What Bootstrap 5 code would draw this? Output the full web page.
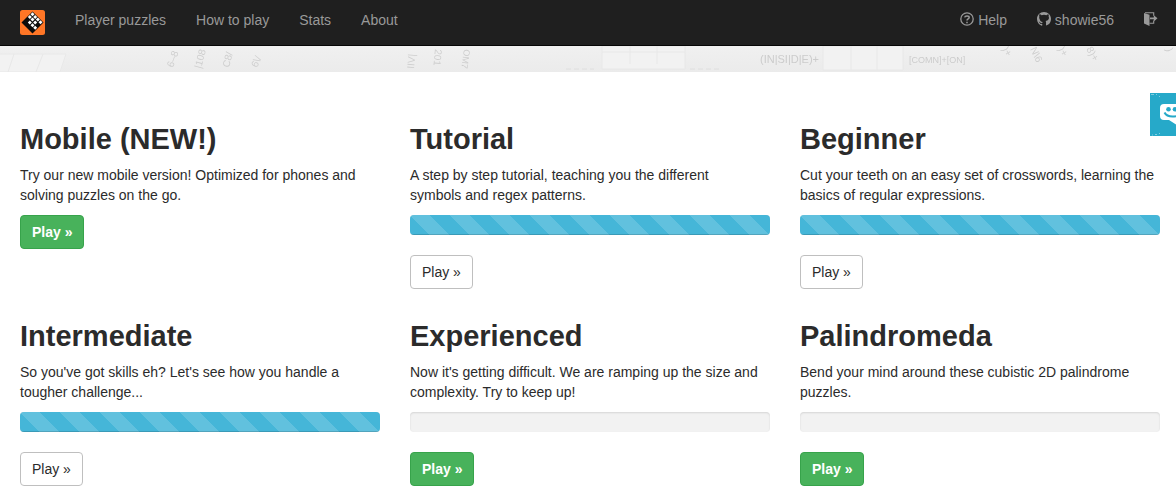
<!DOCTYPE html>
<html lang="en">
<head>
<meta charset="utf-8">
<meta name="viewport" content="width=device-width, initial-scale=1">
<title>Regex Crossword</title>
<link rel="stylesheet" href="https://cdn.jsdelivr.net/npm/bootstrap@5.3.0/dist/css/bootstrap.min.css">
<style>
  body { font-family: "Liberation Sans", Arial, sans-serif; font-size: 14px; line-height: 20px; color: #2b2b2b; background: #fff; }
  .site-bar { background: #1f1f1f; border-bottom: 1px solid #060606; min-height: 46px; padding: 0 10px; }
  .site-bar .navbar-brand { padding: 10px 10px 0; margin: 0 5px 0 0; line-height: 0; }
  .site-bar .navbar-nav .nav-link { color: #999; padding: 10px 15px 15px; line-height: 20px; }
  .site-bar .navbar-nav .nav-link:hover { color: #fff; }
  .site-bar .nav-link svg { vertical-align: -1px; }
  .banner { height: 26px; background: #eee; }
  .banner svg { display: block; width: 100%; height: 26px; }
  .levels { padding: 49px 16px 0 20px; }
  .levels .row { --bs-gutter-x: 30px; --bs-gutter-y: 29px; }
  .levels h2 { font-size: 29px; line-height: 36px; font-weight: 700; margin: 0 0 8px; }
  .levels p { margin: 0 0 10px; }
  .progress { height: 20px; background: #f2f2f2; border-radius: 4px; margin-bottom: 20px; box-shadow: inset 0 1px 2px rgba(0,0,0,.12); }
  .progress .progress-bar { background-color: #45b6d8; background-size: 40px 40px; box-shadow: inset 0 -1px 0 rgba(0,0,0,.15); }
  .btn { --bs-btn-padding-x: 11px; --bs-btn-padding-y: 6px; --bs-btn-font-size: 14px; --bs-btn-line-height: 20px; --bs-btn-border-radius: 4px; }
  .btn-done { --bs-btn-color: #2b2b2b; --bs-btn-bg: #fff; --bs-btn-border-color: #bfbfbf; --bs-btn-hover-bg: #eee; --bs-btn-hover-border-color: #aaa; }
  .btn-play { --bs-btn-color: #fff; --bs-btn-bg: #48b25b; --bs-btn-border-color: #37a34b; --bs-btn-hover-color: #fff; --bs-btn-hover-bg: #3a974b; font-weight: 700; }
  .feedback { position: fixed; top: 93px; right: 0; width: 26px; height: 43px; padding: 0; border: 0; background: #26a9c9; overflow: hidden; }
  .feedback svg { display: block; }
</style>
</head>
<body>
<nav class="navbar navbar-expand site-bar align-items-start" aria-label="Main">
  <a class="navbar-brand" href="#" aria-label="Home">
    <svg width="25" height="25" viewBox="0 0 25 25" aria-hidden="true">
      <rect width="25" height="25" rx="2.5" fill="#ff7626"/>
      <path d="M12.500 1.500 23.500 12.500 12.500 23.500 1.500 12.500Z" fill="#0b0b0b"/>
      <g fill="#fff">
        <path id="c" d="M12.500 2.200l2 2-2 2-2-2z"/>
        <use href="#c" x="-2.700" y="2.700"/><use href="#c" x="2.700" y="2.700"/>
        <use href="#c" y="5.400"/><use href="#c" x="5.400" y="5.400"/>
        <use href="#c" x="-2.700" y="8.400"/><use href="#c" x="2.700" y="8.400"/><use href="#c" x="8" y="8.100"/>
        <use href="#c" x="2.700" y="13.500"/><use href="#c" y="11"/>
      </g>
    </svg>
  </a>
  <ul class="navbar-nav">
    <li class="nav-item"><a class="nav-link" href="#">Player puzzles</a></li>
    <li class="nav-item"><a class="nav-link" href="#">How to play</a></li>
    <li class="nav-item"><a class="nav-link" href="#">Stats</a></li>
    <li class="nav-item"><a class="nav-link" href="#">About</a></li>
  </ul>
  <ul class="navbar-nav ms-auto">
    <li class="nav-item"><a class="nav-link" href="#"><svg width="14" height="14" viewBox="0 0 14 14" fill="none" stroke="currentColor" aria-hidden="true"><circle cx="7" cy="7" r="6.200" stroke-width="1.300"/><path d="M4.700 5.300C5 3.700 9.200 3.500 9.200 5.600 9.200 7 7 7 7 8.600M7 9.700v1.500" stroke-width="1.500"/></svg> Help</a></li>
    <li class="nav-item"><a class="nav-link" href="#"><svg width="14" height="14" viewBox="0 0 16 16" fill="currentColor" aria-hidden="true"><path d="M8 0C3.580 0 0 3.580 0 8c0 3.540 2.290 6.530 5.470 7.590.4.070.55-.17.55-.38 0-.19-.01-.82-.01-1.490-2.010.37-2.530-.49-2.690-.94-.09-.23-.48-.94-.82-1.130-.28-.15-.68-.52-.01-.53.63-.01 1.080.58 1.230.82.72 1.210 1.870.87 2.330.66.07-.52.28-.87.51-1.070-.95-.11-1.950-.48-2.640-1.200C2.500 7.500 2.300 6.200 2.700 5.200 2.300 3.500 2.600 2.900 3 2.700 4 2.800 4.700 3.400 5.200 3.700A9 9 0 0 1 10.800 3.700C11.500 3.200 12.200 2.800 13 2.700 13.500 3.300 13.600 4.300 13.300 5.200 14.200 7 13.500 9 11.800 9.700 11.200 10 10.500 10.100 9.800 10.200c.29.25.54.73.54 1.480 0 1.070-.01 2.930-.01 3.200 0 .21.15.71.2.61A8 8 0 0 0 16 8c0-4.420-3.580-8-8-8Z"/></svg> showie56</a></li>
    <li class="nav-item"><a class="nav-link pe-2" href="#" aria-label="Sign out"><svg width="14" height="14" viewBox="0 0 14 14" fill="currentColor" aria-hidden="true"><path d="M0 1 5.500 2.700V14L0 11.500Z"/><path d="M1 .8h8.700v3M5.500 11.200h4.200V8.500" fill="none" stroke="currentColor" stroke-width="1.100"/><path d="M6 5.400h3.800V3.200L13.500 6.300 9.800 9.400V7.200H6Z"/></svg></a></li>
  </ul>
</nav>

<div class="banner" aria-hidden="true">
  <svg viewBox="0 0 1176 26" preserveAspectRatio="xMidYMid slice">
    <defs>
      <linearGradient id="fade" x2="0" y2="1"><stop offset="0" stop-color="#f0f0f0"/><stop offset="1" stop-color="#ebebeb"/></linearGradient>
      <filter id="soft"><feGaussianBlur stdDeviation=".5"/></filter>
    </defs>
    <rect width="1176" height="26" fill="url(#fade)"/>
    <g filter="url(#soft)">
      <g fill="#f2f2f2" stroke="#e8e8e8">
        <path d="M-2 8H66L60 26H-2Z"/><path d="M14 8 8 26M43 8 36 26" />
        <path d="M602 0H685V23H602ZM602 6H685M630 0V18M657 0V18" />
        <path d="M823 0H903V24H823ZM851 0V24M877 0V24"/>
      </g>
      <g fill="#cfcfcf" font-family="Liberation Sans, sans-serif" font-size="10">
        <text transform="translate(173 22) rotate(-70)">6–8</text>
        <text transform="translate(201 23) rotate(-75)">|108</text>
        <text transform="translate(229 22) rotate(-75)">C8/</text>
        <text transform="translate(257 22) rotate(-65)">6\/</text>
        <text transform="translate(414 23) rotate(-85)">IIV|</text>
        <text transform="translate(435 3) rotate(95)">201</text>
        <text transform="translate(464 3) rotate(98)" font-size="9">OM7</text>
        <text transform="translate(1002 3) rotate(60)">)+</text>
        <text transform="translate(1030 3) rotate(65)">N\6</text>
        <text transform="translate(1058 3) rotate(60)">)+</text>
        <text transform="translate(1086 3) rotate(60)">8)+</text>
        <text transform="translate(1166 3) rotate(75)">)</text>
      </g>
      <g fill="#cccccc" font-family="Liberation Sans, sans-serif">
        <text x="760" y="17" font-size="11">(IN|SI|D|E)+</text>
        <text x="909" y="17" font-size="9">[COMN]+[ON]</text>
      </g>
      <path d="M566 23h28M690 23h30" stroke="#dedede" stroke-dasharray="5 3"/>
    </g>
  </svg>
</div>

<main class="container-fluid levels">
  <div class="row row-cols-3">
    <section class="col">
      <h2>Mobile (NEW!)</h2>
      <p>Try our new mobile version! Optimized for phones and solving puzzles on the go.</p>
      <button type="button" class="btn btn-play">Play »</button>
    </section>
    <section class="col">
      <h2>Tutorial</h2>
      <p>A step by step tutorial, teaching you the different<br>symbols and regex patterns.</p>
      <div class="progress" role="progressbar" aria-label="Tutorial" aria-valuenow="100" aria-valuemin="0" aria-valuemax="100"><div class="progress-bar progress-bar-striped w-100"></div></div>
      <button type="button" class="btn btn-done">Play »</button>
    </section>
    <section class="col">
      <h2>Beginner</h2>
      <p>Cut your teeth on an easy set of crosswords, learning the basics of regular expressions.</p>
      <div class="progress" role="progressbar" aria-label="Beginner" aria-valuenow="100" aria-valuemin="0" aria-valuemax="100"><div class="progress-bar progress-bar-striped w-100"></div></div>
      <button type="button" class="btn btn-done">Play »</button>
    </section>
    <section class="col">
      <h2>Intermediate</h2>
      <p>So you've got skills eh? Let's see how you handle a tougher challenge...</p>
      <div class="progress" role="progressbar" aria-label="Intermediate" aria-valuenow="100" aria-valuemin="0" aria-valuemax="100"><div class="progress-bar progress-bar-striped w-100"></div></div>
      <button type="button" class="btn btn-done">Play »</button>
    </section>
    <section class="col">
      <h2>Experienced</h2>
      <p>Now it's getting difficult. We are ramping up the size and complexity. Try to keep up!</p>
      <div class="progress" role="progressbar" aria-label="Experienced" aria-valuenow="0" aria-valuemin="0" aria-valuemax="100"></div>
      <button type="button" class="btn btn-play">Play »</button>
    </section>
    <section class="col">
      <h2>Palindromeda</h2>
      <p>Bend your mind around these cubistic 2D palindrome puzzles.</p>
      <div class="progress" role="progressbar" aria-label="Palindromeda" aria-valuenow="0" aria-valuemin="0" aria-valuemax="100"></div>
      <button type="button" class="btn btn-play">Play »</button>
    </section>
  </div>
</main>

<button type="button" class="feedback" aria-label="Feedback">
  <svg width="26" height="43" viewBox="0 0 26 43" aria-hidden="true">
    <path d="M14 11H32V27H27V32L19 27H14Q10 27 10 23V15Q10 11 14 11Z" fill="#fff"/>
    <g fill="#26a9c9"><circle cx="18.500" cy="16.300" r="2.300"/><circle cx="25" cy="16.300" r="2.300"/></g>
    <path d="M14.500 19.500Q17 24.500 26 23.200" fill="none" stroke="#26a9c9" stroke-width="2"/>
    <path d="M1 1.500h3M6 1.500h1M9 3.500h1M2 42h1M5 41.500h2M9 40.500h1" stroke="#7fcde0" stroke-width="1"/>
  </svg>
</button>
<script src="https://cdn.jsdelivr.net/npm/bootstrap@5.3.0/dist/js/bootstrap.bundle.min.js"></script>
</body>
</html>
